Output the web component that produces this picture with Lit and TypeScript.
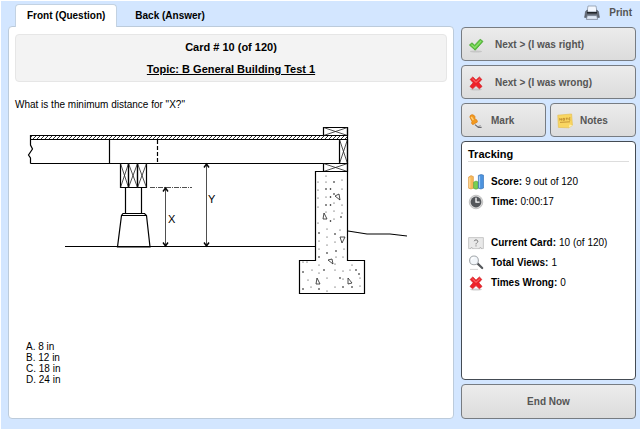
import { LitElement, html, svg, css } from "lit";
import { customElement, state } from "lit/decorators.js";

const check = svg`
  <ellipse cx="8" cy="14.5" rx="6" ry="1" fill="#bbb" opacity=".7"/>
  <path d="M1.4 8 4 5.8 6.6 8.2 12.2 2.2 15 4.4 7.2 13.2Z" fill="#5cc53f" stroke="#46a32e" stroke-width=".8"/>
  <path d="M3.4 7.6 6.8 10.6 13 4" fill="none" stroke="#8ee06f" stroke-width="1.2"/>`;
const cross = svg`
  <ellipse cx="8" cy="14.6" rx="6" ry="1" fill="#bbb" opacity=".7"/>
  <path d="M2.2 4.4 4.8 2 8 5.2 11.4 2 13.8 4.4 10.8 7.8 14 11.4 11.4 13.8 8 10.6 4.6 13.8 2 11.4 5.2 7.8Z" fill="#ee2229" stroke="#d3262b" stroke-width=".8"/>
  <path d="M4.4 3.9 8 7.4 11.8 3.9" fill="none" stroke="#ff7b78" stroke-width="1"/>`;
const pin = svg`
  <path d="M7 11.6 10.4 14.4H13.6" fill="none" stroke="#6b6b70" stroke-width="1.2"/>
  <path d="M10 13.6 12.6 12.6" stroke="#8b8b90" stroke-width="1"/>
  <path d="M2 4.4C1.4 2.4 3.6 1 5.6 2L7 3.6 6.8 6C8.8 6.2 9.8 7.8 9.2 9.2L7.4 10.2 5 11.6C3.6 11.2 3.2 9.8 4 8.4Z" fill="#f39a1f" stroke="#d97a10" stroke-width=".7"/>
  <path d="M3.2 4 5.4 7" stroke="#ffd07a" stroke-width="1.4"/>`;
const note = svg`
  <path d="M.8 2.2 14.6 1 15.4 12.2 12 14.8 1.4 14.4Z" fill="#f9d661" stroke="#e6c156" stroke-width=".7"/>
  <path d="M12 14.8 12.4 11.6 15.4 12.2Z" fill="#fff0ad"/>
  <path d="M2.8 7.600V5.400L4.600 7.400V5.200M6 5.400H7.600V7.200H6ZM8.800 5.200H10.800M9.800 5.200V7.200M13.400 4.900H12V7H13.400M3 9.400 13 8.800" fill="none" stroke="#b07a22" stroke-width=".7"/>`;
const printer = svg`
  <path d="M4 1H12L13 7H3Z" fill="#f4f8ff" stroke="#8b97a8" stroke-width=".8"/>
  <path d="M1.6 6.4 3.4 5V7.4H12.6V5L14.4 6.4 15.4 12.4H.6Z" fill="#666d78" stroke="#484e57" stroke-width=".6"/>
  <path d="M3 7.8H13" stroke="#15181c" stroke-width="1.3"/>
  <path d="M3.2 10.6H12.8L13.6 14.4H2.4Z" fill="#dfe9f6" stroke="#6b7686" stroke-width=".7"/>`;
const bars = svg`
  <path d="M.6 3 3 1.6 5.4 2.6V14.2L3 15 .6 14.2Z" fill="#f6b95c" stroke="#d9923a" stroke-width=".6"/>
  <path d="M1.8 3.6V13.8" stroke="#ffe1a8"/>
  <path d="M5.600 8.200 8 7 10.200 8V14.400L8 15.200 5.600 14.400Z" fill="#79cf53" stroke="#4f9f38" stroke-width=".6"/>
  <path d="M10.400 1.400 13.200.4 15.600 1.200V14L13 15 10.400 14.200Z" fill="#4d93de" stroke="#2d68ad" stroke-width=".6"/>
  <path d="M11.600 2.200V13.800" stroke="#a9d3fb"/>`;
const clock = svg`
  <circle cx="8" cy="8" r="6.8" fill="#d9d9d9" stroke="#a9a9a9" stroke-width=".6"/>
  <circle cx="8" cy="8" r="5.4" fill="#55585c"/>
  <path d="M8 3.800V8.200H11.600" fill="none" stroke="#fff" stroke-width="1.3"/>`;
const card = svg`
  <path d="M.6 2.600H15.400V13.600H.6Z" fill="#e9e9e9" stroke="#bdbdbd" stroke-width=".8"/>
  <path d="M2.400 13.600 3.600 12.200 4.800 13.600M11.200 13.600 12.400 12.200 13.600 13.600" fill="#fff" stroke="#999" stroke-width=".7"/>
  <path d="M6.200 6.200C6.400 4.400 9.800 4.400 9.800 6.400 9.800 7.800 8 7.600 8 9.400M8 10.400V11.400" fill="none" stroke="#777" stroke-width="1"/>`;
const lens = svg`
  <path d="M9.4 8.4 14.2 13" stroke="#55585c" stroke-width="2.2" stroke-linecap="round"/>
  <circle cx="6" cy="5.4" r="4.4" fill="#f2f6fa" stroke="#a4a8ac" stroke-width="1.1"/>
  <path d="M3.400 5A2.800 2.800 0 0 1 6.400 2.600" fill="none" stroke="#fff" stroke-width="1.2"/>
  <path d="M2 14.400H10" stroke="#ccc" stroke-width=".8"/>`;

const icon = (shape: unknown) =>
  html`<svg class="icon" viewBox="0 0 16 16" aria-hidden="true">${shape}</svg>`;

// A timber seen end-on: a box with crossed diagonals.
const timber = (x: number, y: number, w: number, h: number) => svg`
  <path class="line" d="M${x} ${y}h${w}v${h}h${-w}z"/>
  <path class="thin" d="M${x} ${y}l${w} ${h}M${x + w} ${y}l${-w} ${h}"/>`;

const aggregate: [number, number][] = [
  [330.5, 189], [326, 176], [326, 182], [334, 182], [342, 180], [318, 182], [326, 189], [342, 189],
  [318, 190], [334, 194], [326, 197], [318, 198], [330.5, 197], [342, 205], [334, 203], [326, 205],
  [318, 207], [334, 211], [330.5, 205], [326, 212], [342, 213], [330.5, 221], [334, 219], [318, 223],
  [319, 233], [327, 237], [327, 229], [341, 217], [340, 230], [335, 242], [335, 234], [319, 241],
  [327, 245], [336, 251], [344, 249], [319, 249], [327, 253], [343, 257], [336, 257], [319, 257],
  [307, 262], [303, 262], [303, 272], [312, 270], [308, 280], [303, 289], [311, 287], [319, 265],
  [324, 270], [319, 273], [327, 278], [319, 289], [327, 291], [335, 264], [340, 278], [335, 270],
  [343, 279], [343, 287], [335, 287], [352, 265], [356, 270], [350, 270], [360, 278], [352, 287],
  [360, 286], [343, 271], [359, 274],
];
const stones = [
  "M335 196l4-2 1 6z", "M324 213l3 6h-4z", "M340 237h5l-3 6z",
  "M328 260l4-1 1 5z", "M317 278l3 6h-4z", "M348 278l4 5-4 1z",
];

const diagram = html`
  <svg class="diagram" viewBox="15 120 400 180" role="img" aria-label="Section of a floor, pier and foundation wall">
    <defs>
      <pattern id="hatch" width="4" height="4" patternUnits="userSpaceOnUse">
        <path d="M-1 5 5-1M-1 1 1-1M3 5 5 3" stroke="#000" stroke-width=".8"/>
      </pattern>
    </defs>
    <path d="M30.500 135.500H348V139.500H30.500Z" fill="url(#hatch)"/>
    <path class="line" d="M30.500 139.500H348M348 135.500H30.500V145L32.500 149 28.500 155 30.500 158V163.500M30.500 163.500H347.500M109.500 139.500V163"/>
    <path class="line" d="M157.500 140V163" stroke-dasharray="4 2"/>
    ${timber(120.5, 163.5, 8, 24)}${timber(128.5, 163.5, 9, 24)}${timber(137.5, 163.5, 9, 24)}
    <path class="line" d="M125.500 187.500V213.500M141.500 187.500V213.500M123 213.500H144.500L146.500 215.500 150 247H117.500L121.500 215.500ZM121.500 215.500H146.500"/>
    <path class="line" d="M65 246.500H315.500"/>
    <path class="thin" d="M150 187.500H192" stroke-dasharray="5 1 1 1"/>
    <path class="thin" d="M165.500 188V246M206.500 164V246"/>
    <path class="head" d="M163 191.500 165.500 188 168 191.500M163 242.500 165.500 246 168 242.500M204 167.500 206.500 164 209 167.500M204 242.500 206.500 246 209 242.500"/>
    <text x="168" y="223">X</text>
    <text x="208" y="203">Y</text>
    ${timber(323.5, 127.5, 24, 8)}${timber(339.5, 139.5, 8, 24)}${timber(323.5, 163.5, 24, 8)}
    <path class="line" d="M315.500 171.500H347.500V260.500H364.500V293.500H299.500V260.500H315.500ZM347.500 127.500V171.500"/>
    <path class="line" d="M348 231 367 234H390L407 236"/>
    ${stones.map((d) => svg`<path class="thin" d=${d}/>`)}
    ${aggregate.map(([x, y], i) => svg`<circle cx=${x} cy=${y} r=${i % 3 ? 0.5 : 0.8}/>`)}
  </svg>`;

@customElement("app-root")
export class AppRoot extends LitElement {
  static styles = css`
    :host {
      display: flex;
      box-sizing: border-box;
      min-height: 100vh;
      padding: 1px 0 1px 1px;
      background: #fff;
      color: #000;
      font: 10px/12px "Liberation Sans", Arial, sans-serif;
    }
    * { box-sizing: border-box; }
    button { font: inherit; font-weight: bold; cursor: pointer; }
    .page {
      flex: 1;
      display: grid;
      grid-template-columns: minmax(0, 1fr) 175px;
      gap: 7px;
      padding: 0 4px 10px 7px;
      background: #d3e6ff;
    }
    .study, .side { display: flex; flex-direction: column; }
    .tabs { display: flex; height: 26px; padding: 3px 7px 0; }
    .tab {
      padding: 0 11px;
      border: 1px solid transparent;
      border-bottom: 0;
      border-radius: 4px 4px 0 0;
      background: none;
      color: #000;
    }
    .tab + .tab { margin-left: 6px; }
    .tab[aria-selected="true"] {
      background: #fff;
      border-color: #c3d2e2;
      position: relative;
    }
    .panel {
      flex: 1;
      margin-top: -1px;
      padding: 7px 6px;
      background: #fff;
      border: 1px solid #bccbdb;
      border-radius: 4px;
    }
    .heading {
      padding: 6px 5px;
      border: 1px solid #e6e6e6;
      border-radius: 4px;
      background: #f3f3f3;
      text-align: center;
      font-size: 11px;
      line-height: 12px;
    }
    .heading h1, .heading h2 { margin: 0; font-size: inherit; }
    .heading h2 { margin-top: 10px; text-decoration: underline; }
    .question { margin: 17px 0 9px; }
    .diagram { display: block; width: 400px; max-width: 100%; }
    .line { stroke: #000; stroke-width: 1.2; }
    .line, .thin, .head { fill: none; }
    .thin { stroke: #222; stroke-width: .8; }
    .head { stroke: #000; stroke-width: 1.4; }
    .diagram text { font-size: 11px; }
    .answers {
      margin: 41px 0 0;
      padding: 0 0 0 11px;
      list-style: none;
      line-height: 11px;
    }
    .print {
      display: flex;
      align-items: center;
      justify-content: flex-end;
      gap: 9px;
      height: 22px;
      margin-bottom: 4px;
      padding: 1px 4px 0 0;
      border: 0;
      background: none;
      color: #555;
    }
    .icon { width: 16px; height: 16px; flex: none; }
    .actions { display: grid; grid-template-columns: 85px 1fr; gap: 4px; }
    .action {
      display: flex;
      align-items: center;
      gap: 7px;
      height: 34px;
      padding: 1px 6px 0;
      border: 1px solid #777c82;
      border-radius: 4px;
      background: linear-gradient(#ececec, #dcdcdc);
      color: #555;
    }
    .wide { grid-column: 1 / -1; gap: 11px; }
    .end { justify-content: center; height: 35px; }
    .tracking {
      flex: 1;
      margin: 4px 0;
      padding: 6px;
      background: #fff;
      border: 1px solid #444b54;
      border-radius: 4px;
    }
    .tracking h2 {
      margin: 0 0 10px;
      padding-bottom: 1px;
      border-bottom: 1px solid #ddd;
      font-size: 11px;
      line-height: 12px;
    }
    .stats { margin: 0; }
    .stats + .stats { margin-top: 21px; }
    .stat { display: flex; align-items: center; height: 20px; }
    .stat .icon { margin-right: 7px; }
    .stat dt { font-weight: bold; }
    .stat dd { margin: 0 0 0 3px; }
  `;

  @state() private side = "front";

  private tab(id: string, label: string) {
    return html`<button class="tab" role="tab" aria-selected=${this.side === id}
      @click=${() => (this.side = id)}>${label}</button>`;
  }

  private stat(shape: unknown, label: string, value: string) {
    return html`<div class="stat">${icon(shape)}<dt>${label}:</dt><dd>${value}</dd></div>`;
  }

  render() {
    return html`
      <div class="page">
        <main class="study">
          <div class="tabs" role="tablist">
            ${this.tab("front", "Front (Question)")}${this.tab("back", "Back (Answer)")}
          </div>
          <section class="panel" role="tabpanel">
            <header class="heading">
              <h1>Card # 10 (of 120)</h1>
              <h2>Topic: B General Building Test 1</h2>
            </header>
            <p class="question">What is the minimum distance for "X?"</p>
            ${diagram}
            <ul class="answers">
              <li>A. 8 in</li><li>B. 12 in</li><li>C. 18 in</li><li>D. 24 in</li>
            </ul>
          </section>
        </main>
        <aside class="side">
          <button class="print">${icon(printer)}Print</button>
          <div class="actions">
            <button class="action wide">${icon(check)}Next &gt; (I was right)</button>
            <button class="action wide">${icon(cross)}Next &gt; (I was wrong)</button>
            <button class="action">${icon(pin)}Mark</button>
            <button class="action">${icon(note)}Notes</button>
          </div>
          <section class="tracking">
            <h2>Tracking</h2>
            <dl class="stats">
              ${this.stat(bars, "Score", "9 out of 120")}
              ${this.stat(clock, "Time", "0:00:17")}
            </dl>
            <dl class="stats">
              ${this.stat(card, "Current Card", "10 (of 120)")}
              ${this.stat(lens, "Total Views", "1")}
              ${this.stat(cross, "Times Wrong", "0")}
            </dl>
          </section>
          <button class="action end">End Now</button>
        </aside>
      </div>`;
  }
}
